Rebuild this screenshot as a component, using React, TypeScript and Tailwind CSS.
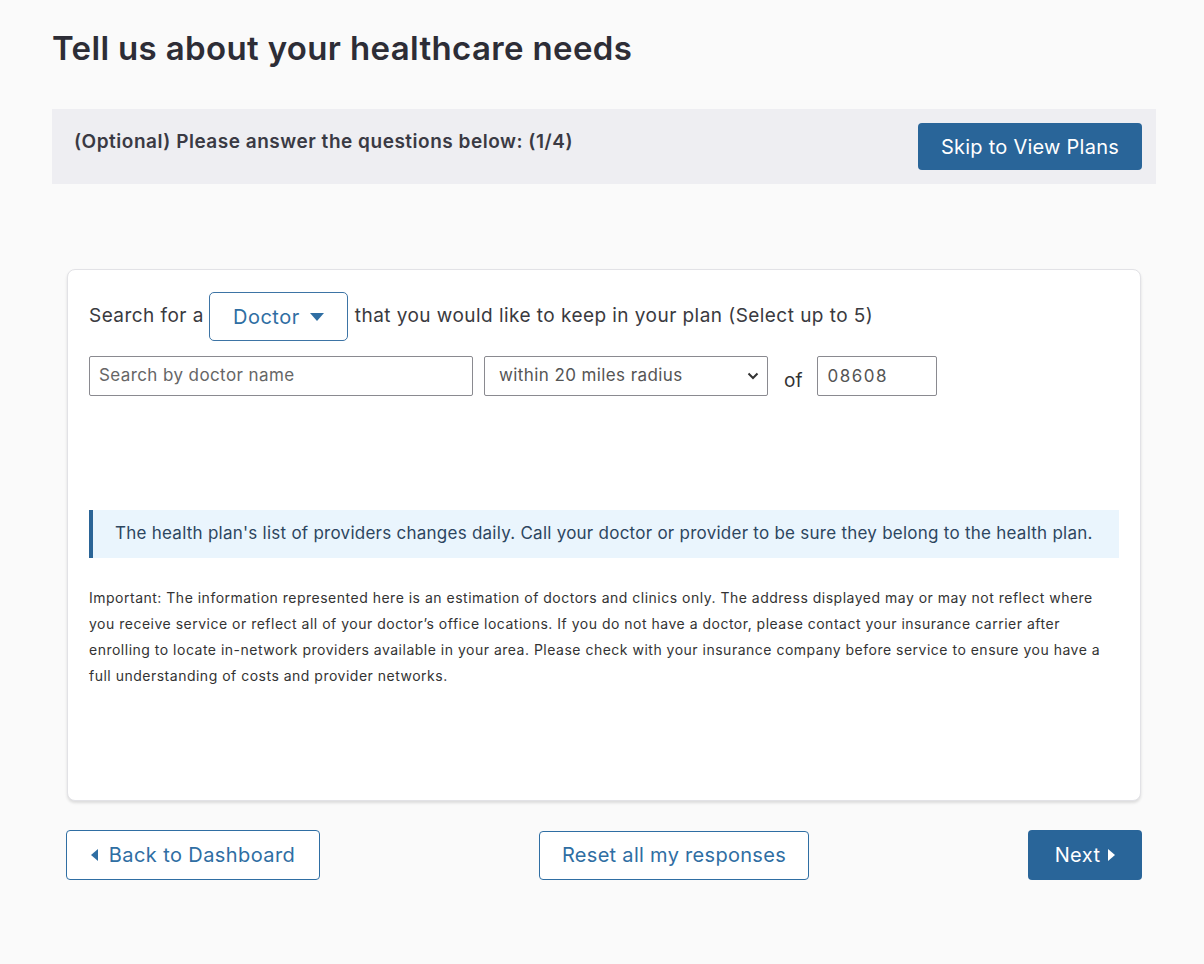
import React from "react";

function Caret({ dir }: { dir: "down" | "left" | "right" }) {
  if (dir === "down")
    return (
      <svg width="14" height="8" viewBox="0 0 14 8" className="inline-block">
        <path d="M0 0 L14 0 L7 8 Z" fill="currentColor" />
      </svg>
    );
  if (dir === "left")
    return (
      <svg width="7" height="12" viewBox="0 0 7 12" className="inline-block">
        <path d="M7 0 L7 12 L0 6 Z" fill="currentColor" />
      </svg>
    );
  return (
    <svg width="7" height="12" viewBox="0 0 7 12" className="inline-block">
      <path d="M0 0 L0 12 L7 6 Z" fill="currentColor" />
    </svg>
  );
}

export default function App() {
  return (
    <div
      className="min-h-[964px] bg-[#fafafa] text-[#333]"
      style={{ fontFamily: "Inter, 'Noto Sans', sans-serif" }}
    >
      <div className="w-[1104px] ml-[52px] pt-[28px]">
        <h1 className="text-[33px] leading-[40px] font-semibold text-[#2d2d36] tracking-[0.35px]">
          Tell us about your healthcare needs
        </h1>
        <div className="mt-[41px] h-[75px] bg-[#eeeef2] flex items-start justify-between pl-[22px] pr-[14px]">
          <p className="mt-[21px] text-[19px] leading-[24px] font-semibold text-[#3a3a44] tracking-[0.52px]">
            (Optional) Please answer the questions below: (1/4)
          </p>
          <button className="mt-[14px] w-[224px] h-[47px] rounded-[4px] bg-[#296599] text-white text-[20px] tracking-[0.25px]">
            Skip to View Plans
          </button>
        </div>

        <div className="mx-[15px] mt-[85px] h-[532px] bg-white border border-[#e2e2e6] rounded-[8px] shadow-[0_2px_3px_rgba(0,0,0,0.12)] px-[21px] pt-[22px]">
          <div className="flex items-center text-[19px] text-[#3a3a40] tracking-[0.45px]">
            <span>Search for a</span>
            <button className="ml-[5px] mr-[7px] w-[139px] h-[49px] border border-[#3d74a5] rounded-[5px] flex items-center justify-center gap-[10px] text-[20px] text-[#2f6ea3] tracking-[0.5px]">
              <span>Doctor</span>
              <Caret dir="down" />
            </button>
            <span>that you would like to keep in your plan (Select up to 5)</span>
          </div>

          <div className="mt-[15px] flex items-center">
            <div className="w-[384px] h-[40px] border border-[#8a8a90] rounded-[2px] flex items-center px-[9px] text-[17px] text-[#666] tracking-[0.4px]">
              Search by doctor name
            </div>
            <div className="ml-[11px] w-[284px] h-[40px] border border-[#8a8a90] rounded-[2px] flex items-center justify-between pl-[14px] pr-[8px] text-[17px] text-[#555] tracking-[0.4px]">
              <span>within 20 miles radius</span>
              <svg width="12" height="8" viewBox="0 0 12 8">
                <path d="M1.5 1.5 L6 6 L10.5 1.5" stroke="#333" strokeWidth="2" fill="none" />
              </svg>
            </div>
            <span className="ml-[16px] mr-[15px] mt-[10px] text-[19px] text-[#333]">of</span>
            <div className="w-[120px] h-[40px] border border-[#8a8a90] rounded-[2px] flex items-start pt-[7px] px-[9px] text-[17px] text-[#555] tracking-[1.5px]">
              08608
            </div>
          </div>

          <div className="mt-[114px] h-[48px] bg-[#eaf5fd] border-l-[4px] border-[#2a6496] flex items-center pl-[22px] text-[17px] text-[#2d4660] tracking-[0.25px]">
            The health plan's list of providers changes daily. Call your doctor or provider to be sure they belong to the health plan.
          </div>

          <p className="mt-[27px] text-[14px] leading-[26px] text-[#333] tracking-[0.5px] pr-[8px]">
            Important: The information represented here is an estimation of doctors and clinics only. The address displayed may or may not reflect where you receive service or reflect all of your doctor’s office locations. If you do not have a doctor, please contact your insurance carrier after enrolling to locate in-network providers available in your area. Please check with your insurance company before service to ensure you have a full understanding of costs and provider networks.
          </p>
        </div>

        <div className="mx-[14px] mt-[29px] flex items-center justify-between">
          <button className="w-[254px] h-[50px] border border-[#2f6ea3] rounded-[4px] bg-white flex items-center justify-center gap-[11px] text-[20px] text-[#2f6ea3] tracking-[0.4px]">
            <Caret dir="left" />
            <span>Back to Dashboard</span>
          </button>
          <button className="w-[270px] h-[49px] border border-[#2f6ea3] rounded-[4px] bg-white text-[20px] text-[#2f6ea3] tracking-[0.3px]">
            Reset all my responses
          </button>
          <button className="w-[114px] h-[50px] rounded-[4px] bg-[#296599] flex items-center justify-center gap-[8px] text-[20px] text-white tracking-[0.4px]">
            <span>Next</span>
            <Caret dir="right" />
          </button>
        </div>
      </div>
    </div>
  );
}
